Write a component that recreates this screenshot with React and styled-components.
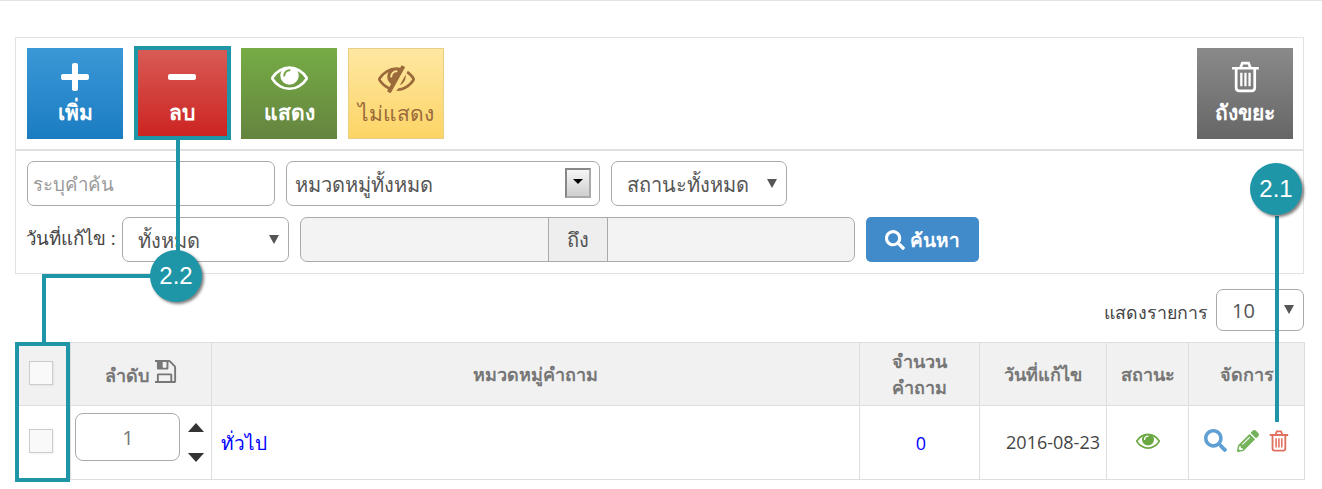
import React from "react";
import styled, { createGlobalStyle } from "styled-components";
import { FaPlus, FaMinus, FaSearch, FaPencilAlt } from "react-icons/fa";

const Global = createGlobalStyle`
  html, body { margin: 0; padding: 0; background: #fff; }
  body { font-family: "Open Sans", "Noto Sans", sans-serif; color: #555; }
  * { box-sizing: border-box; }
`;

const Page = styled.div`
  position: relative;
  width: 1322px;
  height: 489px;
  overflow: hidden;
  border-top: 1px solid #e4e4e4;
  padding: 36px 18px 0 15px;
`;

const Panel = styled.section`
  border: 1px solid #e2e2e2;
  height: 237px;
`;

const Toolbar = styled.div`
  display: flex;
  gap: 11px;
  height: 113px;
  padding: 10px 10px 0 11px;
  border-bottom: 2px solid #dde1e4;
`;

const tones = {
  blue: "background: linear-gradient(#3b98d7, #1a7cc1); color: #fff;",
  red: "background: linear-gradient(#d95c56, #cc2220); color: #fff;",
  green: "background: linear-gradient(#76ac45, #64843f); color: #fff;",
  yellow: "background: linear-gradient(#fee7a2, #fdd567); color: #9a6a3b; border: 1px solid #e9cf85;",
  gray: "background: linear-gradient(#8a8a8a, #666); color: #fff; margin-left: auto;",
};

const ActionButton = styled.div`
  ${(p) => tones[p.$tone]}
  width: 96px;
  height: 91px;
  display: flex;
  flex-direction: column;
  align-items: center;
  font-size: 21px;
  font-weight: ${(p) => (p.$tone === "yellow" ? 400 : 600)};
  line-height: 28px;
  white-space: nowrap;
`;

const ActionIcon = styled.div`
  height: 50px;
  display: flex;
  align-items: center;
  justify-content: center;
  padding-top: 8px;
  font-size: 32px;
`;

const Filters = styled.div`
  padding: 10px 11px 0;
  display: flex;
  flex-direction: column;
  gap: 11px;
`;

const FilterRow = styled.div`
  display: flex;
  align-items: center;
  gap: 11px;
`;

const Field = styled.div`
  position: relative;
  width: ${(p) => p.$w}px;
  height: ${(p) => p.$h ?? 45}px;
  flex: none;
  border: 1px solid #aaa;
  border-radius: 7px;
  background: #fff;
  display: flex;
  align-items: center;
  padding-left: ${(p) => p.$pad ?? 15}px;
  padding-top: ${(p) => p.$top ?? 3}px;
  font-size: ${(p) => p.$size ?? 20}px;
  color: ${(p) => p.$color || "#555"};
`;

const Arrow = styled.span`
  position: absolute;
  right: ${(p) => p.$right ?? 9}px;
  top: ${(p) => p.$top ?? 17}px;
  border-left: 5px solid transparent;
  border-right: 5px solid transparent;
  border-top: 9px solid #555;
`;

const NativeArrow = styled.span`
  position: absolute;
  right: 8px;
  top: 6px;
  width: 26px;
  height: 30px;
  border: 2px solid;
  border-color: #888 #aaa #aaa #888;
  background: linear-gradient(#f6f6f6, #cfcfcf);
  &::after {
    content: "";
    position: absolute;
    left: 6px;
    top: 9px;
    border-left: 5px solid transparent;
    border-right: 5px solid transparent;
    border-top: 5px solid #000;
  }
`;

const Label = styled.span`
  flex: none;
  width: 90px;
  font-size: 18.7px;
  white-space: nowrap;
  color: #444;
  margin-left: -1px;
  margin-right: -5px;
  margin-top: -3px;
`;

const DateGroup = styled.div`
  display: flex;
  width: 555px;
  height: 45px;
  border: 1px solid #aaa;
  border-radius: 7px;
  background: #f3f3f3;
  overflow: hidden;
`;

const DateInput = styled.div`
  flex: 1;
`;

const DateLabel = styled.div`
  width: 60px;
  background: #eee;
  border-left: 1px solid #aaa;
  border-right: 1px solid #aaa;
  display: flex;
  align-items: center;
  justify-content: center;
  font-size: 20px;
  color: #555;
`;

const SearchButton = styled.div`
  width: 113px;
  height: 45px;
  background: #428bca;
  border-radius: 5px;
  color: #fff;
  font-size: 19px;
  font-weight: 600;
  display: flex;
  align-items: center;
  justify-content: center;
  gap: 5px;
`;

const PageSize = styled.div`
  display: flex;
  justify-content: flex-end;
  align-items: center;
  gap: 8px;
  margin-top: 15px;
  height: 42px;
  font-size: 17.8px;
  color: #444;
`;

const PageSizeLabel = styled.span`
  padding-top: 5px;
`;

const Table = styled.table`
  width: 1289px;
  margin-top: 11px;
  border-collapse: collapse;
  table-layout: fixed;
  th, td { border: 1px solid #dedede; padding: 0; }
  th {
    height: 63px;
    background: #f1f1f1;
    color: #777;
    font-size: 18px;
    font-weight: 700;
    line-height: 26px;
    text-align: center;
  }
  td { height: 74px; text-align: center; font-size: 18px; }
`;

const CheckCell = styled.div`
  width: 24px;
  height: 24px;
  margin: ${(p) => p.$lift}px 0 0 13px;
  background: #f9f9f9;
  border: 1px solid #ccc;
  box-shadow: 1px 1px 2px rgba(0, 0, 0, 0.06);
`;

const OrderWrap = styled.div`
  display: flex;
  align-items: center;
  padding-left: 4px;
  gap: 8px;
`;

const OrderInput = styled.div`
  width: 105px;
  height: 48px;
  border: 1px solid #aaa;
  border-radius: 8px;
  display: flex;
  align-items: center;
  justify-content: center;
  padding-left: 1px;
  font-size: 20px;
  color: #777;
  margin-top: -11px;
`;

const Sorter = styled.div`
  display: flex;
  flex-direction: column;
  gap: 21px;
`;

const Tri = styled.span`
  border-left: 8px solid transparent;
  border-right: 8px solid transparent;
  ${(p) => (p.$up ? "border-bottom: 9px solid #333;" : "border-top: 9px solid #333;")}
`;

const SaveSvg = styled.svg`
  width: 23px;
  height: 23px;
  margin-left: 6px;
  vertical-align: -1px;
  fill: currentColor;
`;

const TitleCell = styled.td`
  && { text-align: left; padding-left: 9px; font-size: 19px; color: #00f; }
`;

const CountCell = styled.td`
  && { color: #00f; padding-left: 3px; }
`;

const DateCell = styled.td`
  && { color: #444; font-size: 18px; text-align: right; padding-right: 6px; padding-bottom: 1px; }
`;

const StatusEye = styled.span`
  color: #6aa842;
`;

const Actions = styled.div`
  display: flex;
  justify-content: center;
  align-items: center;
  gap: 10px;
  margin-top: -4px;
`;

const Highlight = styled.div`
  position: absolute;
  left: ${(p) => p.$x}px;
  top: ${(p) => p.$y}px;
  width: ${(p) => p.$w}px;
  height: ${(p) => p.$h}px;
  border: 4px solid #1e96a8;
`;

const Line = styled.div`
  position: absolute;
  left: ${(p) => p.$x}px;
  top: ${(p) => p.$y}px;
  width: ${(p) => p.$w}px;
  height: ${(p) => p.$h}px;
  background: #1e96a8;
`;

const Bubble = styled.div`
  position: absolute;
  left: ${(p) => p.$x}px;
  top: ${(p) => p.$y}px;
  width: 52px;
  height: 52px;
  border-radius: 50%;
  background: #1e96a8;
  color: #fff;
  font-family: "Liberation Sans", Arial, sans-serif;
  font-size: 24px;
  display: flex;
  align-items: center;
  justify-content: center;
  box-shadow: 2px 2px 3px rgba(0, 0, 0, 0.5);
`;

const EYE = "M1664 960q-152-236-381-353 61 104 61 225 0 185-131.5 316.5t-316.5 131.5-316.5-131.5-131.5-316.5q0-121 61-225-229 117-381 353 133 205 333.5 326.5t434.5 121.5 434.5-121.5 333.5-326.5zm-720-384q0-20-14-34t-34-14q-125 0-214.5 89.5t-89.5 214.5q0 20 14 34t34 14 34-14 14-34q0-86 61-147t147-61q20 0 34-14t14-34zm848 384q0 34-20 69-140 230-376.5 368.5t-499.5 138.5-499.5-139-376.5-368q-20-35-20-69t20-69q140-229 376.5-368t499.5-139 499.5 139 376.5 368q20 35 20 69z";
const EYE_SLASH = "M555 1335l78-141q-87-63-136-159t-49-203q0-121 61-225-229 117-381 353 167 258 427 375zm389-759q0-20-14-34t-34-14q-125 0-214.5 89.5t-89.5 214.5q0 20 14 34t34 14 34-14 14-34q0-86 61-147t147-61q20 0 34-14t14-34zm363-191q0 7-1 9-106 189-316 567t-315 566l-49 89q-10 16-28 16-12 0-134-70-16-10-16-28 0-12 44-87-143-65-263.5-173t-208.5-245q-20-31-20-69t20-69q153-235 380-371t496-136q89 0 180 17l54-97q10-16 28-16 5 0 18 6t31 15.5 33 18.5 31.5 18.5 19.5 11.5q16 10 16 27zm37 447q0 139-79 253.5t-209 164.5l280-502q8 45 8 84zm448 128q0 35-20 69-39 64-109 145-150 172-347.5 267t-419.5 95l74-132q212-18 392.5-137t301.5-307q-115-179-282-294l63-112q95 64 182.5 153t144.5 184q20 34 20 69z";
const SAVE = "M384 1536h768v-384h-768v384zm896 0h128v-896q0-14-10-38.5t-20-34.5l-281-281q-10-10-34-20t-39-10v416q0 40-28 68t-68 28h-576q-40 0-68-28t-28-68v-416h-128v1280h128v-416q0-40 28-68t68-28h832q40 0 68 28t28 68v416zm-384-928v-320q0-13-9.5-22.5t-22.5-9.5h-192q-13 0-22.5 9.5t-9.5 22.5v320q0 13 9.5 22.5t22.5 9.5h192q13 0 22.5-9.5t9.5-22.5zm640 32v928q0 40-28 68t-68 28h-1344q-40 0-68-28t-28-68v-1344q0-40 28-68t68-28h928q40 0 88 20t76 48l280 280q28 28 48 76t20 88z";

const Eye = ({ size, slash }) => (
  <svg width={size} height={size * 0.86} viewBox="0 128 1792 1536" fill="currentColor">
    <path d={slash ? EYE_SLASH : EYE} />
  </svg>
);

const Trash = ({ height, color }) => (
  <svg width={(height * 28) / 31} height={height} viewBox="2 1 28 31" fill="none" stroke={color} strokeWidth="2.6">
    <path d="M3 8h26M7 8v19q0 3 3 3h12q3 0 3-3V8M11 8l2-5h6l2 5" />
    <path d="M12 12.5v13M16 12.5v13M20 12.5v13" strokeWidth="2.2" />
  </svg>
);

const buttons = [
  { tone: "blue", label: "เพิ่ม", icon: <FaPlus /> },
  { tone: "red", label: "ลบ", icon: <FaMinus /> },
  { tone: "green", label: "แสดง", icon: <Eye size={37} /> },
  { tone: "yellow", label: "ไม่แสดง", icon: <Eye size={37} slash /> },
  { tone: "gray", label: "ถังขยะ", icon: <Trash height={32} color="#fff" /> },
];

export default function App() {
  return (
    <Page>
      <Global />
      <Panel>
        <Toolbar>
          {buttons.map((b) => (
            <ActionButton key={b.tone} $tone={b.tone}>
              <ActionIcon>{b.icon}</ActionIcon>
              {b.label}
            </ActionButton>
          ))}
        </Toolbar>
        <Filters>
          <FilterRow>
            <Field $w={248} $pad={5} $top={1} $size={18.7} $color="#999">ระบุคำค้น</Field>
            <Field $w={314} $pad={8}>หมวดหมู่ทั้งหมด<NativeArrow /></Field>
            <Field $w={176}>สถานะทั้งหมด<Arrow /></Field>
          </FilterRow>
          <FilterRow>
            <Label>วันที่แก้ไข :</Label>
            <Field $w={167}>ทั้งหมด<Arrow /></Field>
            <DateGroup>
              <DateInput />
              <DateLabel>ถึง</DateLabel>
              <DateInput />
            </DateGroup>
            <SearchButton><FaSearch size={20} />ค้นหา</SearchButton>
          </FilterRow>
        </Filters>
      </Panel>
      <PageSize>
        <PageSizeLabel>แสดงรายการ</PageSizeLabel>
        <Field $w={88} $h={42} $pad={15} $top={0}>10<Arrow $top={15} /></Field>
      </PageSize>
      <Table>
        <colgroup>
          <col width="55" />
          <col width="141" />
          <col width="648" />
          <col width="120" />
          <col width="127" />
          <col width="82" />
          <col width="116" />
        </colgroup>
        <thead>
          <tr>
            <th><CheckCell $lift={-2} /></th>
            <th>
              ลำดับ
              <SaveSvg viewBox="128 128 1536 1536"><path d={SAVE} /></SaveSvg>
            </th>
            <th>หมวดหมู่คำถาม</th>
            <th>จำนวน<br />คำถาม</th>
            <th>วันที่แก้ไข</th>
            <th>สถานะ</th>
            <th>จัดการ</th>
          </tr>
        </thead>
        <tbody>
          <tr>
            <td><CheckCell $lift={-4} /></td>
            <td>
              <OrderWrap>
                <OrderInput>1</OrderInput>
                <Sorter><Tri $up /><Tri /></Sorter>
              </OrderWrap>
            </td>
            <TitleCell>ทั่วไป</TitleCell>
            <CountCell>0</CountCell>
            <DateCell>2016-08-23</DateCell>
            <td><StatusEye><Eye size={24} /></StatusEye></td>
            <td>
              <Actions>
                <FaSearch size={23} color="#5f9fd3" />
                <FaPencilAlt size={22} color="#74b35a" />
                <Trash height={22} color="#e2705f" />
              </Actions>
            </td>
          </tr>
        </tbody>
      </Table>
      <Highlight $x={134} $y={45} $w={97} $h={94} />
      <Line $x={176} $y={139} $w={4} $h={125} />
      <Line $x={42} $y={273} $w={110} $h={4} />
      <Line $x={42} $y={273} $w={4} $h={69} />
      <Highlight $x={15} $y={341} $w={55} $h={140} />
      <Line $x={1275} $y={215} $w={4} $h={206} />
      <Bubble $x={150} $y={249}>2.2</Bubble>
      <Bubble $x={1250} $y={162}>2.1</Bubble>
    </Page>
  );
}
